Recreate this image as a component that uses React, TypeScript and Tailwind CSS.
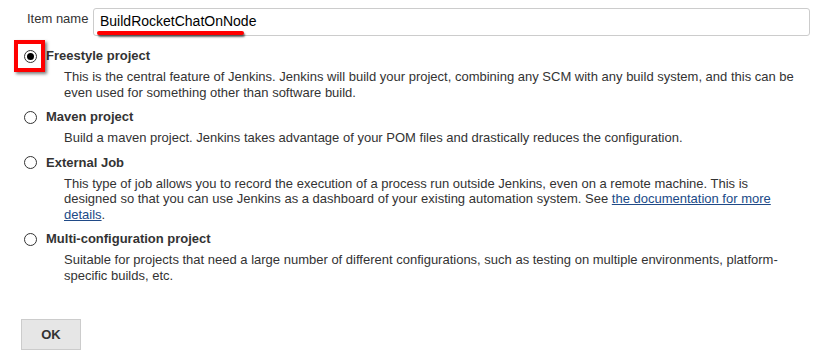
const jobTypes = [
  {
    name: "Freestyle project",
    desc: (
      <>
        This is the central feature of Jenkins. Jenkins will build your project, combining any SCM with any build
        system, and this can be even used for something other than software build.
      </>
    ),
    checked: true,
  },
  {
    name: "Maven project",
    desc: (
      <>
        Build a maven project. Jenkins takes advantage of your POM files and drastically reduces the configuration.
      </>
    ),
  },
  {
    name: "External Job",
    desc: (
      <>
        This type of job allows you to record the execution of a process run outside Jenkins, even on a remote
        machine. This is designed so that you can use Jenkins as a dashboard of your existing automation system. See{" "}
        <a href="#" className="text-[#204a87] underline">
          the documentation for more details
        </a>
        .
      </>
    ),
  },
  {
    name: "Multi-configuration project",
    desc: (
      <>
        Suitable for projects that need a large number of different configurations, such as testing on multiple
        environments, platform-specific builds, etc.
      </>
    ),
  },
];

function Radio({ checked }: { checked?: boolean }) {
  return (
    <span className="w-[13px] h-[13px] rounded-full border border-[#333] bg-white flex items-center justify-center shrink-0">
      {checked && <span className="w-[7px] h-[7px] rounded-full bg-black" />}
    </span>
  );
}

export default function App() {
  return (
    <div
      className="w-[818px] h-[362px] bg-white text-[#333] text-[13px] leading-[15.5px] overflow-hidden"
      style={{ fontFamily: '"Liberation Sans", Arial, sans-serif' }}
    >
      {/* item name row */}
      <div className="flex items-start pt-[8px] pl-[27px] pr-[8px]">
        <label className="mt-[3px] w-[66px] shrink-0">Item name</label>
        <div className="relative flex-1 h-[28px] border border-[#ccc] rounded-[3px] flex items-center pl-[6px] text-[14px] text-black">
          BuildRocketChatOnNode
          <span className="absolute left-[3px] top-[22px] w-[147px] h-[4px] bg-[#f00] rounded-[2px] shadow-[1px_2px_2px_rgba(0,0,0,0.6)]" />
        </div>
      </div>

      <div className="mt-[10px] flex flex-col">
        {jobTypes.map((j, i) => (
          <div key={j.name} className={i === 0 ? "" : "mt-[7px]"}>
            <div className="relative flex items-center h-[20px] pl-[24px]">
              <Radio checked={j.checked} />
              {j.checked && (
                <span className="absolute left-[14px] top-[-6px] w-[31px] h-[32px] border-[4px] border-[#f00] shadow-[2px_2px_3px_rgba(0,0,0,0.5)]" />
              )}
              <span className="ml-[9px] font-bold">{j.name}</span>
            </div>
            <div className="pl-[64px] pr-[12px] mt-[3px] w-[812px]">{j.desc}</div>
          </div>
        ))}
      </div>

      <div className="pl-[21px] mt-[36px]">
        <button className="w-[60px] h-[31px] bg-[#e6e6e6] border border-[#ccc] font-bold text-[#333]">OK</button>
      </div>
    </div>
  );
}
